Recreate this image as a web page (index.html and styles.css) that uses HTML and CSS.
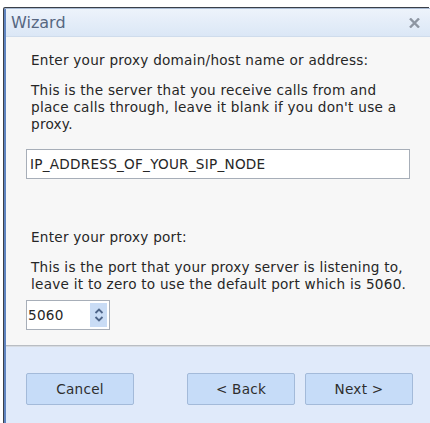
FILE: index.html
```html
<!DOCTYPE html>
<html>
<head>
<meta charset="utf-8">
<title>Wizard</title>
<link rel="stylesheet" href="styles.css">
</head>
<body>
<div class="window">
  <div class="titlebar">
    <span class="title">Wizard</span>
    <svg class="close" width="11" height="10" viewBox="0 0 11 10">
      <path d="M1 0.5 L10 9.5 M10 0.5 L1 9.5" stroke="#8d96a2" stroke-width="2.4" fill="none"/>
    </svg>
  </div>
  <div class="content">
    <p class="label first">Enter your proxy domain/host name or address:</p>
    <p class="text">This is the server that you receive calls from and<br>place calls through, leave it blank if you don't use a<br>proxy.</p>
    <div class="field">IP_ADDRESS_OF_YOUR_SIP_NODE</div>
    <p class="label second">Enter your proxy port:</p>
    <p class="text">This is the port that your proxy server is listening to,<br>leave it to zero to use the default port which is 5060.</p>
    <div class="spin">
      <span class="spin-value">5060</span>
      <span class="spin-btn">
        <svg width="10" height="16" viewBox="0 0 10 16">
          <path d="M1.5 6 L5 2.5 L8.5 6" stroke="#4d6488" stroke-width="1.8" fill="none"/>
          <path d="M1.5 10 L5 13.5 L8.5 10" stroke="#4d6488" stroke-width="1.8" fill="none"/>
        </svg>
      </span>
    </div>
  </div>
  <div class="footer">
    <button class="btn">Cancel</button>
    <div class="nav">
      <button class="btn">&lt; Back</button>
      <button class="btn">Next &gt;</button>
    </div>
  </div>
</div>
</body>
</html>
```

FILE: styles.css
```css
html, body {
  margin: 0;
  padding: 0;
  background: #ffffff;
  overflow: hidden;
}

body {
  font-family: "DejaVu Sans", "Liberation Sans", sans-serif;
  font-size: 13.6px;
  letter-spacing: 0.25px;
  color: #262626;
}

.window {
  margin: 8px 0 0 4px;
  width: 424px;
  height: 420px;
  border-left: 2px solid #5f84c0;
  border-top: 1px solid #a9bbd3;
  border-top-left-radius: 2px;
  box-shadow: -1px -1px 0 #3a3f48;
  display: flex;
  flex-direction: column;
}

.titlebar {
  height: 27px;
  flex: none;
  display: flex;
  align-items: center;
  justify-content: space-between;
  padding: 0 10px 0 5px;
  background: linear-gradient(#edf3fb, #dbe7f6);
  border-bottom: 1px solid #cfdcec;
}

.title {
  font-size: 16px;
  letter-spacing: 0;
  color: #566781;
}

.close {
  display: block;
}

.content {
  height: 308px;
  flex: none;
  background: #f7f7f7;
  padding: 0 20px;
  box-sizing: border-box;
}

p {
  margin: 0;
  line-height: 17px;
  padding-left: 5px;
  white-space: nowrap;
}

.label.first {
  padding-top: 15px;
}

.text {
  margin-top: 13px;
}

.label.second {
  margin-top: 50px;
}

.field {
  margin-top: 16px;
  height: 30px;
  box-sizing: border-box;
  width: 384px;
  background: #ffffff;
  border: 1px solid #a7aeb8;
  display: flex;
  align-items: center;
  padding-left: 3px;
}

.spin {
  margin-top: 7px;
  width: 84px;
  height: 30px;
  box-sizing: border-box;
  background: #ffffff;
  border: 1px solid #a7aeb8;
  display: flex;
  align-items: center;
  justify-content: space-between;
  padding: 2px 2px 2px 1px;
}

.spin-btn {
  width: 17px;
  height: 100%;
  background: #c9dcf5;
  display: flex;
  align-items: center;
  justify-content: center;
}

.spin-btn svg {
  display: block;
}

.footer {
  flex: 1;
  background: #e0eafa;
  border-top: 1px solid #b9bdc3;
  box-shadow: inset 0 1px 0 #d6dbe2;
  display: flex;
  justify-content: space-between;
  align-items: flex-start;
  padding: 27px 17px 0 20px;
}

.nav {
  display: flex;
  gap: 10px;
}

.btn {
  width: 108px;
  height: 32px;
  font-family: inherit;
  font-size: 13.6px;
  letter-spacing: 0.25px;
  color: #2e2e2e;
  background: #c6dcf8;
  border: 1px solid #a3bad9;
  border-radius: 2px;
  padding: 0;
}
```
